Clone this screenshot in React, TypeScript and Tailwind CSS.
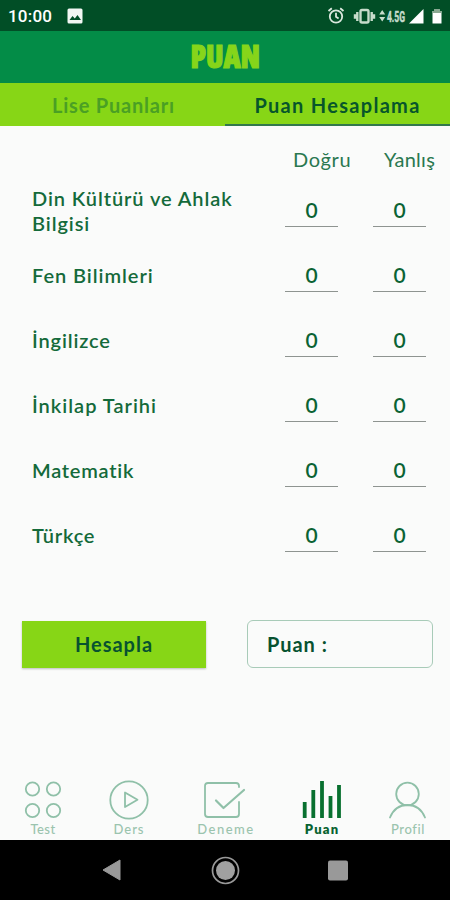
import React from 'react';

type Subject = { name: string; spacing: string };

const subjects: Subject[] = [
  { name: 'Din Kültürü ve Ahlak Bilgisi', spacing: 'tracking-[0.92px]' },
  { name: 'Fen Bilimleri', spacing: 'tracking-[0.95px]' },
  { name: 'İngilizce', spacing: 'tracking-[0.85px]' },
  { name: 'İnkilap Tarihi', spacing: 'tracking-[1px]' },
  { name: 'Matematik', spacing: 'tracking-[0.75px]' },
  { name: 'Türkçe', spacing: 'tracking-[0.8px]' },
];

function StatusBar() {
  return (
    <div className="flex h-[31px] items-center bg-[#014e26] pl-2 text-white">
      <span className="w-[45px] whitespace-nowrap pt-px font-[Roboto] text-[17px] font-medium leading-none tracking-[0.2px]">10:00</span>
      <svg className="ml-[14px]" width="16" height="16" viewBox="0 0 16 16">
        <rect x="0.5" y="0.5" width="15" height="15" rx="1.5" fill="#f2f7f3" />
        <path d="M2.5 12l3-4 2.3 2.6L10.5 7l3.5 5z" fill="#014e26" />
      </svg>
      <svg className="ml-auto" width="125" height="20" viewBox="0 0 125 20" fill="none">
        <g stroke="#dbe8de" strokeWidth="1.8">
          <circle cx="11" cy="10.5" r="6.2" />
          <path d="M11 6.8v4l2.6 1.8M3.5 5l3.3-2.8M18.5 5l-3.3-2.8" />
        </g>
        <g stroke="#c7dccb" strokeWidth="2.4">
          <rect x="35.5" y="4" width="8" height="12.5" rx="1.5" />
          <path d="M32.3 6v9M46.7 6v9M30 8.2v4.6M49 8.2v4.6" />
        </g>
        <path d="M54.2 8.5l3-4.5 3 4.5zM54.2 11h6l-3 4.5z" fill="#c7dccb" />
        <text x="62" y="15.5" fill="#c7dccb" stroke="#c7dccb" strokeWidth="0.5" fontFamily="Roboto" fontSize="15" fontWeight="700" textLength="18" lengthAdjust="spacingAndGlyphs">4.5G</text>
        <path d="M84 17.5L98.5 3v14.5z" fill="white" />
        <path d="M107.5 5h2V3h5v2h2v12.5h-9z" fill="white" />
        <path d="M107.5 5h2V3h5v2h2v2h-9z" fill="#8aa992" />
      </svg>
    </div>
  );
}

function Score() {
  return (
    <div className="flex h-[35px] w-[53px] items-center justify-center border-b border-[#8e9490] pt-px font-[Lato] text-[21px] font-semibold text-[#0a6334]">
      0
    </div>
  );
}

const inactive = '#8fc0a8';

function NavItem({ label, active, children, width, spacing }: { label: string; active?: boolean; children: React.ReactNode; width: string; spacing: string }) {
  return (
    <div className={`flex flex-col items-center ${width}`}>
      <svg width="44" height="42" viewBox="0 0 44 42" fill="none" stroke={active ? '#08702f' : inactive} strokeWidth="1.8" strokeLinecap="round" strokeLinejoin="round">
        {children}
      </svg>
      <span className={`whitespace-nowrap text-[13px] leading-[16px] ${spacing} ${active ? 'font-extrabold text-[#086330]' : 'font-medium text-[#9bc4ae]'}`}>{label}</span>
    </div>
  );
}

export default function App() {
  return (
    <div className="flex h-[900px] w-[450px] flex-col overflow-hidden bg-[#fafbfa] font-['Lato',sans-serif]">
      <StatusBar />
      <header className="flex h-[52px] items-center justify-center bg-[#038c47] pb-px">
        <h1 className="scale-x-[0.96] font-['Open_Sans',sans-serif] text-[31px] font-extrabold leading-none text-[#86d51a] [-webkit-text-stroke:1.2px_#86d51a] [font-stretch:75%]">PUAN</h1>
      </header>
      <div className="flex h-[43px] bg-[#87d616] text-[20px] font-bold">
        <div className="flex w-[225px] items-center justify-center text-[#4aa024]">
          <span className="pl-[2px] tracking-[0.8px]">Lise Puanları</span>
        </div>
        <div className="flex w-[225px] items-center justify-center border-b-2 border-[#31784c] pt-[2px] text-[#07562b]">
          <span className="tracking-[1.3px]">Puan Hesaplama</span>
        </div>
      </div>

      <main className="flex h-[646px] flex-col">
        <div className="flex h-[51px] pl-[293px] pt-[19px] text-[20px] leading-[28px] text-[#2a7850]">
          <span className="w-[91px] tracking-[0.6px]">Doğru</span>
          <span className="tracking-[0.25px]">Yanlış</span>
        </div>
        {subjects.map((subject) => (
          <div key={subject.name} className="flex h-[65px] items-center pl-8 text-[20px] font-semibold leading-[25px] text-[#146a3a]">
            <div className={`w-[253px] pr-10 pt-[2px] ${subject.spacing}`}>{subject.name}</div>
            <div className="flex gap-[35px]">
              <Score />
              <Score />
            </div>
          </div>
        ))}
        <div className="flex pl-[22px] pt-[53px] text-[20px] font-bold text-[#075230]">
          <button className="mt-px h-[47px] w-[184px] bg-[#87d616] pb-px shadow-[0_1px_2px_rgba(0,0,0,0.25)]">
            <span className="tracking-[1px]">Hesapla</span>
          </button>
          <div className="ml-[41px] flex h-[48px] w-[186px] items-center rounded-[6px] border border-[#a8cbb8] pl-[19px] tracking-[0.95px]">Puan&nbsp;:</div>
        </div>
      </main>

      <nav className="flex h-[68px] pl-[3px] pt-[7px]">
        <NavItem label="Test" width="w-[80px]" spacing="tracking-[0.4px]">
          <circle cx="11.5" cy="10" r="6.7" />
          <circle cx="32.5" cy="10" r="6.7" />
          <circle cx="11.5" cy="31.5" r="6.7" />
          <circle cx="32.5" cy="31.5" r="6.7" />
        </NavItem>
        <NavItem label="Ders" width="w-[92px]" spacing="tracking-[1px]">
          <circle cx="22" cy="21" r="18.7" />
          <path d="M18 13.5v14.5l12.5-7.2z" />
        </NavItem>
        <NavItem label="Deneme" width="w-[102px]" spacing="tracking-[1.5px]">
          <path d="M35 8V7a3 3 0 0 0-3-3h-28a3 3 0 0 0-3 3v28a3 3 0 0 0 3 3h28a3 3 0 0 0 3-3V23" />
          <path d="M12 21.5l7.500 7.500 20.500-18" strokeWidth="2.2" />
        </NavItem>
        <NavItem label="Puan" active width="w-[90px]" spacing="tracking-[1.2px]">
          <path d="M4.700 23v16M13.300 11v28M22 2v37M30.500 17v22M39 6v33" strokeWidth="3.8" strokeLinecap="butt" />
        </NavItem>
        <NavItem label="Profil" width="w-[82px]" spacing="tracking-[0.6px]">
          <circle cx="21.5" cy="15" r="11.3" />
          <path d="M4 38.500c3.500-8.500 9.500-12.500 17.500-12.500s14 4 17.500 12.500" />
        </NavItem>
      </nav>

      <footer className="flex h-[60px] items-center justify-center bg-black">
        <svg width="450" height="60" viewBox="0 0 450 60">
          <path d="M103 30l17-10v20z" fill="#999" stroke="#999" strokeLinejoin="round" />
          <circle cx="225.5" cy="30.5" r="13" fill="none" stroke="#999" strokeWidth="1.7" />
          <circle cx="225.5" cy="30.5" r="9.5" fill="#a0a0a0" />
          <rect x="328" y="20.5" width="20" height="20" rx="2" fill="#999" />
        </svg>
      </footer>
    </div>
  );
}
